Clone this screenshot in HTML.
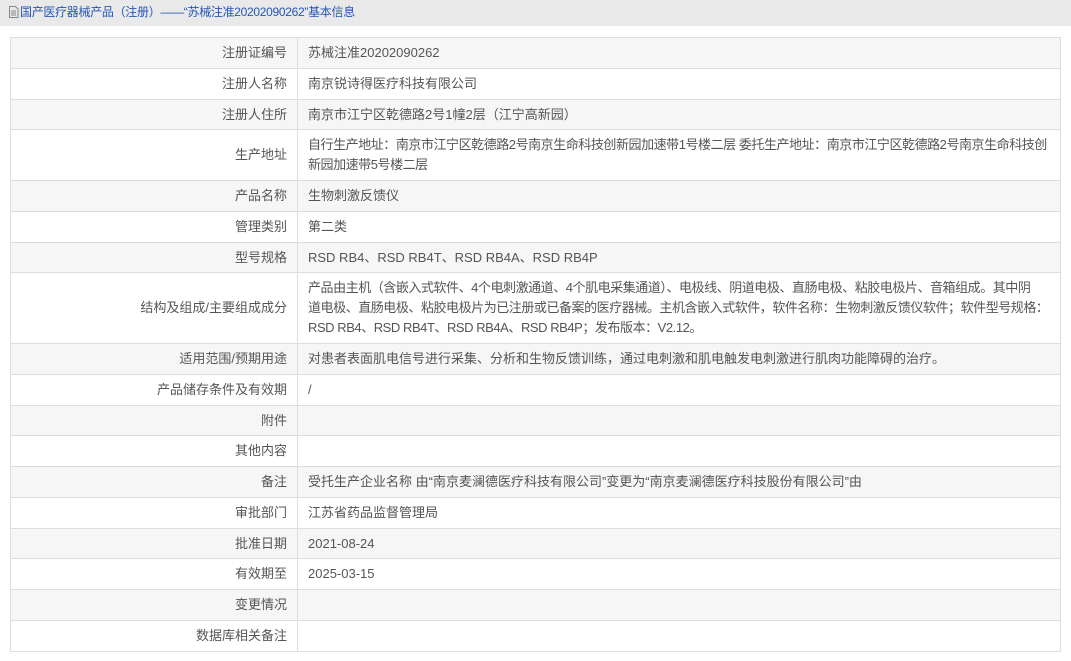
<!DOCTYPE html>
<html><head><meta charset="utf-8"><style>
body{margin:0;width:1071px;height:661px;background:#fff;font-family:"Liberation Sans","Noto Sans CJK SC",sans-serif;font-size:13px;color:#555;overflow:hidden}
.hd{height:26px;background:#e9e9e9;line-height:24px;padding-left:8px;color:#2456b8;font-size:12px;letter-spacing:-0.3px}
.hd svg{vertical-align:-2px;margin-right:1px}
table{position:absolute;left:10px;top:37px;width:1051px;border-collapse:collapse;border:1px solid #d2d2d2;table-layout:fixed}
td{border:1px solid #ddd;padding:5px 10px 4.75px;line-height:20px;height:20px;vertical-align:middle;white-space:nowrap;overflow:hidden}
td.l{width:266px;text-align:right}
.t{letter-spacing:-0.45px}
tr:nth-child(odd){background:#f6f6f6}
</style></head><body>
<div class="hd"><svg width="11" height="12" viewBox="0 0 11 12"><path d="M1.5 .5h6l2.5 2.5v8.5h-8.5z" fill="none" stroke="#888"/><path d="M3 5h5M3 7h5M3 9h5" stroke="#888"/></svg>国产医疗器械产品（注册）——“苏械注准20202090262”基本信息</div>
<table>
<tr><td class="l">注册证编号</td><td>苏械注准20202090262</td></tr>
<tr><td class="l">注册人名称</td><td>南京锐诗得医疗科技有限公司</td></tr>
<tr><td class="l">注册人住所</td><td>南京市江宁区乾德路2号1幢2层（江宁高新园）</td></tr>
<tr><td class="l">生产地址</td><td class="t">自行生产地址：南京市江宁区乾德路2号南京生命科技创新园加速带1号楼二层 委托生产地址：南京市江宁区乾德路2号南京生命科技创<br>新园加速带5号楼二层</td></tr>
<tr><td class="l">产品名称</td><td>生物刺激反馈仪</td></tr>
<tr><td class="l">管理类别</td><td>第二类</td></tr>
<tr><td class="l">型号规格</td><td>RSD RB4、RSD RB4T、RSD RB4A、RSD RB4P</td></tr>
<tr><td class="l">结构及组成/主要组成成分</td><td class="t">产品由主机（含嵌入式软件、4个电刺激通道、4个肌电采集通道）、电极线、阴道电极、直肠电极、粘胶电极片、音箱组成。其中阴<br>道电极、直肠电极、粘胶电极片为已注册或已备案的医疗器械。主机含嵌入式软件，软件名称：生物刺激反馈仪软件；软件型号规格：<br>RSD RB4、RSD RB4T、RSD RB4A、RSD RB4P；发布版本：V2.12。</td></tr>
<tr><td class="l">适用范围/预期用途</td><td>对患者表面肌电信号进行采集、分析和生物反馈训练，通过电刺激和肌电触发电刺激进行肌肉功能障碍的治疗。</td></tr>
<tr><td class="l">产品储存条件及有效期</td><td>/</td></tr>
<tr><td class="l">附件</td><td></td></tr>
<tr><td class="l">其他内容</td><td></td></tr>
<tr><td class="l">备注</td><td>受托生产企业名称 由“南京麦澜德医疗科技有限公司”变更为“南京麦澜德医疗科技股份有限公司”由</td></tr>
<tr><td class="l">审批部门</td><td>江苏省药品监督管理局</td></tr>
<tr><td class="l">批准日期</td><td>2021-08-24</td></tr>
<tr><td class="l">有效期至</td><td>2025-03-15</td></tr>
<tr><td class="l">变更情况</td><td></td></tr>
<tr><td class="l">数据库相关备注</td><td></td></tr>
</table>
</body></html>
